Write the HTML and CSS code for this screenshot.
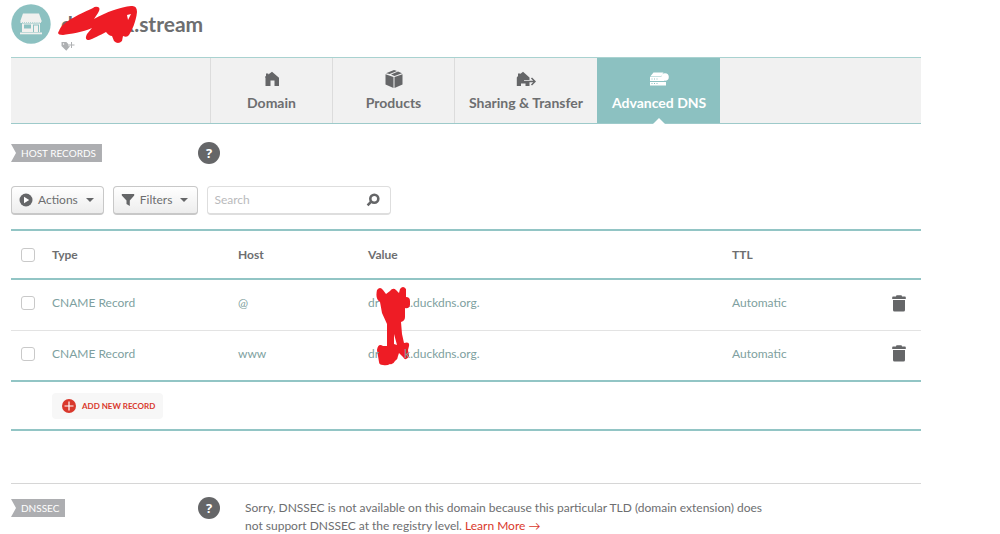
FILE: index.html
```html
<!DOCTYPE html>
<html lang="en">
<head>
<meta charset="utf-8">
<meta name="viewport" content="width=device-width, initial-scale=1">
<title>Advanced DNS</title>
<link rel="stylesheet" href="styles.css">
</head>
<body>
<svg class="sprite" aria-hidden="true">
  <symbol id="trash" viewBox="0 0 14 17"><path d="M4 1.500Q4 .3 5 .3h4q1 0 1 1.200h3q.8 0 .8 1V4H.2V2.500q0-1 .8-1zM1 5h12v10q0 1.500-1.500 1.500h-9Q1 16.500 1 15z"/></symbol>
</svg>
<main class="page">
  <header class="domain">
    <svg class="avatar" viewBox="0 0 40 40" aria-hidden="true">
      <circle cx="20" cy="20" r="19.700" fill="#8cc1c1"/>
      <g fill="#f1f1ef">
        <path d="M12 9.500h16l2.500 7v1.500H9.500v-1.500z"/>
        <path d="M9.500 18.500h21" stroke="#f1f1ef" stroke-width="1.200" stroke-dasharray="1.500 .6"/>
        <path fill-rule="evenodd" d="M11 19.500h18V28H11zM13 20.500v4h7v-4zM22 20.500V28h1v-6.500h4V28h1v-7.500z"/>
        <path d="M9 28.500h22v1.800H9z"/>
      </g>
    </svg>
    <div class="domain-info">
      <h1 class="domain-name">d<span class="name-gap"></span>k.stream
        <svg class="name-mark" viewBox="0 0 84 42" aria-hidden="true"><path d="M4 30C7 20 28 12 38 7Q40 5 43 6Q46 7 43 12L39 18C51 11 66 6 76 5Q82 4 82 11C81 21 77 29 74 34Q72 37 68 35L67 40Q63 44 59 40L57 35Q54 35 51 31C45 34 38 38 34 39Q29 39 32 33L37 27C28 31 15 33 8 34Q1 34 4 30z" fill="#ee1c25"/><path d="M72 14l4-1-3 6z" fill="#fff"/></svg>
      </h1>
      <svg class="tag" viewBox="0 0 14 10" aria-hidden="true"><path fill="#aeb0b2" fill-rule="evenodd" d="M.5 1h4.800l4 4-4 4.700-4.800-4.700zM2.500 2.300a.7.7 0 1 0 .1 1.400.7.7 0 0 0-.1-1.400z"/><path d="M10.500 1v6M7.500 4h6" stroke="#fff" stroke-width="2.500"/><path d="M10.500 1v6M7.500 4h6" stroke="#aeb0b2" stroke-width="1"/></svg>
    </div>
  </header>

  <nav class="tabs">
    <a class="tab" href="#domain"><svg viewBox="0 0 20 16"><path d="M10 .8l7 6V15h-4.500V9.500h-4V15H3.500V6.500H3V5.800l1-.9V2.500h2.300v.9z"/></svg>Domain</a>
    <a class="tab" href="#products"><svg viewBox="0 0 20 18"><path d="M10 0l3 1-7.300 3L2 3.200zM14 1.400l4 1.800L10.500 6 7 4.500zM1.500 4.300l8 2.800V18l-8-3.500zM18.500 4.300l-8 2.800V18l8-3.500z"/></svg>Products</a>
    <a class="tab" href="#sharing"><svg viewBox="0 0 20 16"><path d="M7 .8l6.500 5.700V9H8v2h5.500v4H9.500v-2.500H5V15H.8V6.500L2 5V2.500h2.300v.6z"/><path d="M6 10.500h12.500M15.500 7l3.500 3.500-3.500 3.500" fill="none" stroke="#656668" stroke-width="1.500"/></svg>Sharing &amp; Transfer</a>
    <a class="tab tab-active" href="#dns" aria-current="page"><svg viewBox="0 0 20 16"><path d="M4.500 1.500h10L12 5.500H1.200zM1 6h12l2 1v3H1zM1 11h16v3.500H1z"/><circle cx="16" cy="6" r="3.800"/><path d="M2.500 8h1M5 8h1M7.500 8h1M2.500 12.500h1M5 12.500h1M7.500 12.500h1" stroke="#8cc1c1" stroke-width="1"/></svg>Advanced DNS</a>
  </nav>

  <section class="section-head">
    <h2 class="ribbon">HOST RECORDS</h2>
    <button class="help" type="button" aria-label="Help with host records">?</button>
  </section>

  <form class="toolbar">
    <button class="tool" type="button"><svg viewBox="0 0 14 14"><circle cx="7" cy="7" r="6.500"/><path d="M5 3.700v6.600L10.200 7z" fill="#fff"/></svg>Actions<span class="caret"></span></button>
    <button class="tool" type="button"><svg viewBox="0 0 14 14"><path d="M.8 1h12.400v1.500L8.800 7.500V13L5.500 11V7.500L.8 2.500z"/></svg>Filters<span class="caret"></span></button>
    <div class="search">
      <input type="search" placeholder="Search" aria-label="Search">
      <button class="search-go" type="submit" aria-label="Run search"><svg viewBox="0 0 14 14"><circle cx="8.300" cy="5.700" r="4" fill="none" stroke="#656668" stroke-width="2.600"/><path d="M5.200 8.700L1.600 12.300" stroke="#656668" stroke-width="2.600"/></svg></button>
    </div>
  </form>

  <div class="records">
    <table>
      <colgroup><col class="c-check"><col class="c-type"><col class="c-host"><col><col class="c-ttl"><col class="c-del"></colgroup>
      <thead>
        <tr><th><input type="checkbox" aria-label="Select all records"></th><th>Type</th><th>Host</th><th>Value</th><th>TTL</th><th></th></tr>
      </thead>
      <tbody>
        <tr><td><input type="checkbox" aria-label="Select record @"></td><td>CNAME Record</td><td>@</td>
          <td><span class="value">dr<span class="value-gap"></span>k.duckdns.org.
            <svg class="value-mark" viewBox="0 0 34 80" aria-hidden="true"><path d="M1 3Q4-1 7 3l3 4 4-3q3-4 6-1l3 3 1-4q3-4 6 0v8q4 0 4 4v4q-1 4-5 3v9q0 4-4 5l1 12 2 9q6-2 5 3l-1 4 1 6q-3 6-6 1l-4-4-1 3q0 3-3 5-2 4-5 3-3 2-7 1-4 0-4-3L1 63q1-7 6-4l4 0V37L6 26 4 15Q-1 12 1 3zM18 47v10l3 1z" fill="#ee1c25" fill-rule="evenodd"/></svg></span></td>
          <td>Automatic</td><td><button class="delete" type="button" aria-label="Delete record @"><svg viewBox="0 0 14 17"><use href="#trash"/></svg></button></td></tr>
        <tr><td><input type="checkbox" aria-label="Select record www"></td><td>CNAME Record</td><td>www</td>
          <td><span class="value">dr<span class="value-gap"></span>k.duckdns.org.</span></td>
          <td>Automatic</td><td><button class="delete" type="button" aria-label="Delete record www"><svg viewBox="0 0 14 17"><use href="#trash"/></svg></button></td></tr>
      </tbody>
    </table>
    <div class="add-row">
      <button class="add" type="button"><svg viewBox="0 0 14 14"><circle cx="7" cy="7" r="7" fill="#d9382c"/><path d="M7 2.500v9M2.500 7h9" stroke="#fff" stroke-width="1.200"/></svg>ADD NEW RECORD</button>
    </div>
  </div>

  <section class="dnssec">
    <div class="section-label"><h2 class="ribbon">DNSSEC</h2></div>
    <button class="help" type="button" aria-label="Help with DNSSEC">?</button>
    <p>Sorry, DNSSEC is not available on this domain because this particular TLD (domain extension) does not support DNSSEC at the registry level. <a href="#more">Learn More →</a></p>
  </section>
</main>
</body>
</html>
```
FILE: styles.css
```css
* { box-sizing: border-box; }
body {
  margin: 0;
  background: #fff;
  color: #6d6e70;
  font: 12px/18px Lato, "Open Sans", sans-serif;
}
button, input { font: inherit; color: inherit; }
button { cursor: pointer; }
svg { display: block; flex: none; }
h1, h2, p { margin: 0; }
.sprite { position: absolute; width: 0; height: 0; }
.page { padding: 4px 79px 0 11px; }

.domain { display: flex; gap: 10px; height: 53px; }
.avatar { width: 40px; height: 40px; }
.domain-info { padding-top: 8px; }
.domain-name {
  position: relative;
  font-size: 21px;
  line-height: 24px;
  font-weight: 700;
  white-space: nowrap;
}
.name-gap { display: inline-block; width: 50px; }
.name-mark { position: absolute; left: -6px; top: -11px; width: 84px; height: 42px; }
.tag { width: 14px; height: 10px; margin-top: 5px; }

.tabs {
  display: flex;
  height: 67px;
  padding-left: 199px;
  background: #f1f1f1;
  border-top: 1px solid #a9d2d0;
  border-bottom: 1px solid #9dcaca;
}
.tab {
  display: flex;
  flex-direction: column;
  align-items: center;
  gap: 6px;
  min-width: 122px;
  padding: 12px 14px 0;
  border-left: 1px solid #dcdcdc;
  color: #6d6e70;
  font-size: 14px;
  font-weight: 700;
  text-decoration: none;
  white-space: nowrap;
}
.tab svg { width: 20px; height: 18px; fill: #656668; }
.tab-active {
  position: relative;
  border-color: #8cc1c1;
  background: #8cc1c1;
  color: #fff;
}
.tab-active svg { fill: #fff; }
.tab-active::after {
  content: "";
  position: absolute;
  bottom: -1px;
  left: calc(50% - 6px);
  border: 6px solid transparent;
  border-top: 0;
  border-bottom-color: #fff;
}

.section-head { display: grid; grid-template-columns: 187px 22px; align-items: center; margin-top: 18px; }
.ribbon {
  width: max-content;
  padding: 0 6px 0 10px;
  background: #adaeb1;
  clip-path: polygon(0 0, 100% 0, 100% 100%, 0 100%, 5px 50%);
  color: #fff;
  font-size: 10px;
  line-height: 18px;
  font-weight: 400;
}
.help {
  width: 22px;
  height: 22px;
  padding: 0;
  border: 0;
  border-radius: 50%;
  background: #656668;
  color: #fff;
  font: 700 13px/22px "Open Sans", sans-serif;
}

.toolbar { display: flex; gap: 9px; margin-top: 22px; }
.tool {
  display: flex;
  align-items: center;
  gap: 5px;
  height: 29px;
  padding: 0 9px 0 7px;
  border: 1px solid #c8c8c8;
  border-bottom-width: 2px;
  border-radius: 4px;
  background: linear-gradient(#fff, #ededed);
}
.tool svg { width: 14px; height: 14px; fill: #656668; }
.caret { margin-left: 3px; border: 4px solid transparent; border-top-color: #656668; border-bottom: 0; }
.search {
  display: flex;
  align-items: center;
  width: 184px;
  height: 29px;
  padding: 0 10px 0 6px;
  border: 1px solid #dedede;
  border-bottom-width: 2px;
  border-radius: 4px;
}
.search input { flex: 1; min-width: 0; padding: 0; border: 0; outline: 0; background: none; }
.search input::placeholder { color: #b9babc; }
.search-go { padding: 0; border: 0; background: none; }
.search-go svg { width: 14px; height: 14px; }

.records { margin-top: 14px; border-top: 2px solid #92c5c5; border-bottom: 2px solid #92c5c5; }
table { width: 100%; table-layout: fixed; border-collapse: collapse; color: #7e9fa0; }
.c-check { width: 41px; }
.c-type { width: 186px; }
.c-host { width: 130px; }
.c-ttl { width: 160px; }
.c-del { width: 29px; }
th, td { height: 51px; padding: 0 0 3px; text-align: left; vertical-align: middle; border-bottom: 1px solid #e3e3e3; }
th { height: 48px; padding: 0; color: #6d6e70; border-bottom: 2px solid #92c5c5; }
tbody tr:last-child td { border-bottom: 2px solid #92c5c5; }
input[type="checkbox"] {
  appearance: none;
  display: block;
  width: 14px;
  height: 14px;
  margin: 0 0 0 10px;
  border: 1px solid #c9c9c9;
  border-radius: 3px;
  background: #fff;
}
.value { position: relative; white-space: nowrap; }
.value-gap { display: inline-block; width: 25px; }
.value-mark { position: absolute; left: 8px; top: -8px; width: 34px; height: 80px; }
.delete { display: block; padding: 0; border: 0; background: none; }
.delete svg { width: 14px; height: 17px; fill: #656668; }
.add-row { padding: 11px 0 10px 41px; }
.add {
  display: flex;
  align-items: center;
  gap: 6px;
  height: 26px;
  padding: 0 8px 0 10px;
  border: 0;
  border-radius: 4px;
  background: #f7f7f7;
  color: #d9382c;
  font-size: 8px;
  font-weight: 700;
}
.add svg { width: 14px; height: 14px; }

.dnssec {
  display: grid;
  grid-template-columns: 187px 22px minmax(0, 548px);
  align-items: start;
  margin-top: 52px;
  padding-top: 13px;
  border-top: 1px solid #d6d6d6;
}
.section-label { padding-top: 2px; }
.dnssec p { padding: 2px 0 0 25px; }
.dnssec a { color: #d9382c; text-decoration: none; }
```
